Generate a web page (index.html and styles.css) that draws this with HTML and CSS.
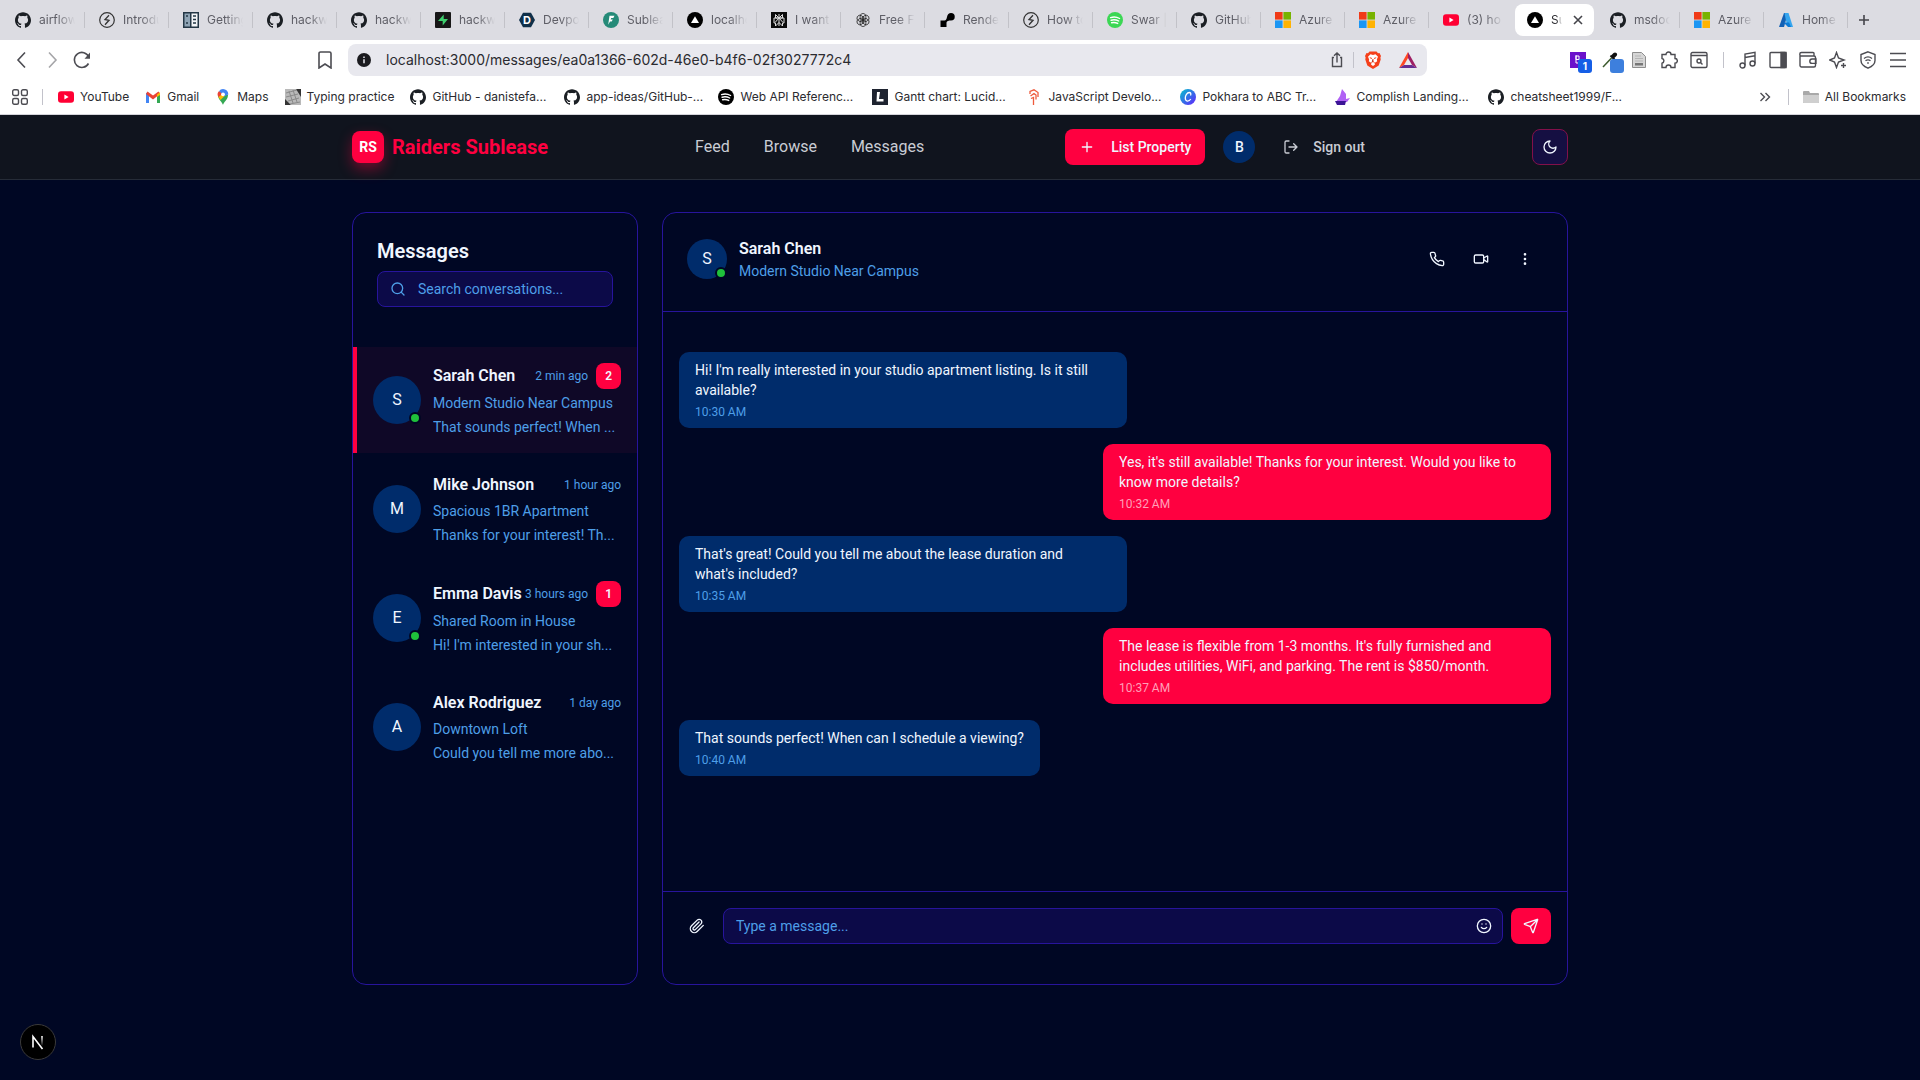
FILE: index.html
```html
<!DOCTYPE html>
<html lang="en">
  <head>
    <meta charset="UTF-8" />
    <meta name="viewport" content="width=device-width, initial-scale=1.0" />
    <title>Sublease</title>
    <link rel="stylesheet" href="styles.css">
  </head>
  <body>
    <!-- shared icons -->
    <svg class="sprite" aria-hidden="true">
      <symbol id="github" viewBox="0 0 24 24"><path fill="#1b1f24" d="M12 .297c-6.63 0-12 5.373-12 12 0 5.303 3.438 9.8 8.205 11.385.6.113.82-.258.82-.577 0-.285-.01-1.04-.015-2.04-3.338.724-4.042-1.61-4.042-1.61C4.422 18.07 3.633 17.7 3.633 17.7c-1.087-.744.084-.729.084-.729 1.205.084 1.838 1.236 1.838 1.236 1.07 1.835 2.809 1.305 3.495.998.108-.776.417-1.305.76-1.605-2.665-.3-5.466-1.332-5.466-5.93 0-1.31.465-2.38 1.235-3.22-.135-.303-.54-1.523.105-3.176 0 0 1.005-.322 3.3 1.23.96-.267 1.98-.399 3-.405 1.02.006 2.04.138 3 .405 2.28-1.552 3.285-1.23 3.285-1.23.645 1.653.24 2.873.12 3.176.765.84 1.23 1.91 1.23 3.22 0 4.61-2.805 5.625-5.475 5.92.42.36.81 1.096.81 2.22 0 1.606-.015 2.896-.015 3.286 0 .315.21.69.825.57C20.565 22.092 24 17.592 24 12.297c0-6.627-5.373-12-12-12"/></symbol>
      <symbol id="bolt" viewBox="0 0 16 16"><circle cx="8" cy="8" r="7.3" fill="none" stroke="#333" stroke-width="1.2"/><path d="M10 3.200 6 7.500l4 .8-4 4.500" fill="none" stroke="#333" stroke-width="1.300"/></symbol>
      <symbol id="book" viewBox="0 0 16 16"><path fill="#243746" d="M0 0h16v16H0z"/><path fill="#8fa4b5" d="M1.5 1.5h5.5v13H1.5z"/><path fill="#f3f5f7" d="M8.5 1.5h6v13h-6z"/><path stroke="#243746" stroke-width="1.4" d="M10 4h3M10 7.5h3M10 11h3M3 4h2M3 11h2"/></symbol>
      <symbol id="supabase" viewBox="0 0 16 16"><rect width="16" height="16" rx="1" fill="#171717"/><path fill="#3ecf6e" d="M8.700 2.500 3 9h4.700v4.500L13 7H8.700z"/></symbol>
      <symbol id="devpost" viewBox="0 0 16 16"><path fill="#0f2f49" d="M4 .8h8L16 8l-4 7.200H4L0 8z"/><text x="8" y="12" text-anchor="middle" class="mark-text">D</text></symbol>
      <symbol id="fider" viewBox="0 0 16 16"><circle cx="8" cy="8" r="8" fill="#258a78"/><path fill="#fff" d="m6.500 3.800h5L10.300 6H8.200l-.6 1.500h2.200L8.700 9.400H7L5.200 12.800z"/></symbol>
      <symbol id="next" viewBox="0 0 16 16"><circle cx="8" cy="8" r="8" fill="#000"/><path fill="#fff" d="M8 4.200 12 11H4z"/></symbol>
      <symbol id="perplexity" viewBox="0 0 16 16"><path fill="#0b0b0b" d="M0 0h16v16H0z"/><path fill="none" stroke="#ddd" d="M8 2v12M4.500 2.500 8 6l3.500-3.500V6h-7zM3 6h10v5h-1.500v3L8 10.500 4.500 14v-3H3zM8 6l-4 4.500M8 6l4 4.500"/></symbol>
      <symbol id="openai" viewBox="0 0 16 16"><g fill="none" stroke="#2b2b2b" stroke-width=".8"><ellipse cx="8" cy="5" rx="3" ry="3.600"/><ellipse cx="8" cy="5" rx="3" ry="3.600" transform="rotate(60 8 8)"/><ellipse cx="8" cy="5" rx="3" ry="3.600" transform="rotate(120 8 8)"/><ellipse cx="8" cy="5" rx="3" ry="3.600" transform="rotate(180 8 8)"/><ellipse cx="8" cy="5" rx="3" ry="3.600" transform="rotate(240 8 8)"/><ellipse cx="8" cy="5" rx="3" ry="3.600" transform="rotate(300 8 8)"/></g></symbol>
      <symbol id="render" viewBox="0 0 16 16"><path fill="#000" d="M1.500 15V8.500h4C7 8.500 7.500 7 8 5c.5-2.500 1.800-4 4-4a3.700 3.700 0 0 1 0 7.500c-2 0-4.500.5-4.500 2.500v4z"/></symbol>
      <symbol id="spotify" viewBox="0 0 16 16"><circle cx="8" cy="8" r="8"/><path fill="none" stroke="#fff" stroke-linecap="round" stroke-width="1.400" d="M3.600 5.600c3-.9 6.300-.6 9 .9M4.100 8.200c2.600-.7 5.300-.4 7.600.8M4.600 10.700c2.100-.5 4.200-.3 6.100.7"/></symbol>
      <symbol id="microsoft" viewBox="0 0 16 16"><path fill="#f03a17" d="M0 0h7.600v7.600H0z"/><path fill="#77b300" d="M8.400 0H16v7.600H8.400z"/><path fill="#1c96f3" d="M0 8.400h7.600V16H0z"/><path fill="#ffb302" d="M8.400 8.400H16V16H8.400z"/></symbol>
      <symbol id="youtube" viewBox="0 0 16 16"><rect y="2.200" width="16" height="11.600" rx="3" fill="#ff0033"/><path fill="#fff" d="M6.400 5.600 10.600 8l-4.200 2.400z"/></symbol>
      <symbol id="azure" viewBox="0 0 16 16"><path fill="#1260b4" d="M6 1h4L6 15H1z"/><path fill="#35a5ee" d="M6.500 1h4L15 15h-4.500L8 9z"/><path fill="#0a7ad6" d="M5.500 10.500H11L13 15h-3z"/></symbol>
      <symbol id="search" viewBox="0 0 24 24"><circle cx="11" cy="11" r="8"/><path d="m21 21-4.300-4.300"/></symbol>
    </svg>

    <div class="browser">
      <div class="tabs">
        <button class="tab"><svg><use href="#github"/></svg><span>airflow</span></button>
        <button class="tab"><svg><use href="#bolt"/></svg><span>Introdu</span></button>
        <button class="tab"><svg><use href="#book"/></svg><span>Getting</span></button>
        <button class="tab"><svg><use href="#github"/></svg><span>hackw</span></button>
        <button class="tab"><svg><use href="#github"/></svg><span>hackw</span></button>
        <button class="tab"><svg><use href="#supabase"/></svg><span>hackw</span></button>
        <button class="tab"><svg><use href="#devpost"/></svg><span>Devpos</span></button>
        <button class="tab"><svg><use href="#fider"/></svg><span>Sublea</span></button>
        <button class="tab"><svg><use href="#next"/></svg><span>localho</span></button>
        <button class="tab"><svg><use href="#perplexity"/></svg><span>I want</span></button>
        <button class="tab"><svg><use href="#openai"/></svg><span>Free F</span></button>
        <button class="tab"><svg><use href="#render"/></svg><span>Render</span></button>
        <button class="tab"><svg><use href="#bolt"/></svg><span>How to</span></button>
        <button class="tab"><svg fill="#3bd754"><use href="#spotify"/></svg><span>Swar |</span></button>
        <button class="tab"><svg><use href="#github"/></svg><span>GitHub</span></button>
        <button class="tab"><svg><use href="#microsoft"/></svg><span>Azure</span></button>
        <button class="tab"><svg><use href="#microsoft"/></svg><span>Azure</span></button>
        <button class="tab before-active"><svg><use href="#youtube"/></svg><span>(3) ho</span></button>
        <button class="tab active"><svg><use href="#next"/></svg><span>Su</span><svg class="close" viewBox="0 0 16 16"><path d="m4 4 8 8M12 4l-8 8"/></svg></button>
        <button class="tab"><svg><use href="#github"/></svg><span>msdoc</span></button>
        <button class="tab"><svg><use href="#microsoft"/></svg><span>Azure</span></button>
        <button class="tab"><svg><use href="#azure"/></svg><span>Home</span></button>
        <button class="new-tab" aria-label="New tab"><svg viewBox="0 0 16 16"><path d="M8 3v10M3 8h10"/></svg></button>
      </div>

      <div class="toolbar">
        <div class="history">
          <button aria-label="Back"><svg viewBox="0 0 18 18"><path d="M12 1.500 5 9l7 7.500"/></svg></button>
          <button aria-label="Forward" disabled><svg viewBox="0 0 18 18"><path d="m6 1.500 7 7.500-7 7.500"/></svg></button>
          <button aria-label="Reload"><svg viewBox="0 0 18 18"><path d="M15.500 12.500A7.500 7.500 0 1 1 15.800 6"/><path class="solid" d="M17 1.500v6.300h-5.500z"/></svg></button>
        </div>
        <button class="save" aria-label="Bookmark"><svg viewBox="0 0 18 18"><path d="M3 2.500a1.500 1.500 0 0 1 1.500-1.500h9A1.500 1.500 0 0 1 15 2.500V17l-6-4-6 4z"/></svg></button>
        <div class="address">
          <svg class="site-info" viewBox="0 0 14 14"><circle cx="7" cy="7" r="7" fill="#1b1b1f"/><path stroke="#e8e8ee" stroke-width="1.500" d="M7 6.200v4M7 3.500v1.500"/></svg>
          <input type="text" aria-label="Address" value="localhost:3000/messages/ea0a1366-602d-46e0-b4f6-02f3027772c4">
          <svg class="line" viewBox="0 0 16 16"><path d="M5 5.500H3.500v9h9v-9H11M8 10.500V1M5 3.800 8 1l3 2.800"/></svg>
          <i></i>
          <svg class="brave" viewBox="0 0 16 18"><path fill="#f5401b" d="M4.500.5h7l1.500 1.700 1.500-.2L16 5l-.6 1.500.3 2-2 6L8 18l-5.700-3.500-2-6 .3-2L0 5l1.500-3 1.500.2z"/><path fill="#fff" d="m8 4 2.500-.8 2.500 2.500-1.200 2.800.4 1.800-2.700 1.700.5 1.500-2 1.500-2-1.500.5-1.500-2.700-1.700.4-1.800L3 5.700l2.500-2.500z"/><path stroke="#f5401b" d="m4.800 6.700 2.200.8M11.200 6.700 9 7.500M8 8v2.500l-1.500 1M8 10.500l1.500 1"/></svg>
          <svg class="triangle" viewBox="0 0 18 16"><path fill="#ff4724" d="M9 0 0 16l5-3 4-7z"/><path fill="#9e1f63" d="m9 0 9 16-5-3-4-7z"/><path fill="#662d91" d="m0 16 5-3h8l5 3z"/></svg>
        </div>
        <div class="extensions">
          <button aria-label="Bookmarker" class="ext"><svg viewBox="0 0 16 16"><path fill="#6a11cb" d="M0 0h16v16H0z"/><path stroke="#fff" fill="none" d="M6 3v8h3.500V7.500H6V4h3v3.500"/></svg><b>1</b></button>
          <button aria-label="Color picker" class="ext"><svg viewBox="0 0 16 16"><path stroke="#3c5a2e" stroke-width="1.500" d="m1 15 8.500-9"/><path stroke="#111" stroke-width="4" stroke-linecap="round" d="m11.500 4 1.500-1.500"/><path stroke="#111" stroke-width="2" d="m8.500 3.500 4 4"/></svg><b class="plain"></b></button>
          <button aria-label="Document"><svg viewBox="0 0 16 18"><path fill="#d6d6d6" stroke="#8d8d8d" d="M1.500 1.500h9l4 4v11h-13z"/><path stroke="#b4b4b4" d="M4 5h6M4 7.500h8M4 10h8"/><path fill="#777" d="M4 12h8v2.500H4z"/></svg></button>
          <button aria-label="Extensions"><svg class="line" viewBox="0 0 18 18"><path d="M2 3.500h4a2.500 2.500 0 0 1 5 0h4v4a2.300 2.300 0 0 1 0 4.700V16.500h-4a2.300 2.300 0 0 0-5 0H2v-4.300a2.400 2.400 0 0 0 0-4.700z"/></svg></button>
          <button aria-label="Find"><svg class="line" viewBox="0 0 18 18"><rect x="1" y="1.500" width="16" height="15" rx="1.500"/><path d="M1 4.500h16M10.500 11.500l2 2"/><circle cx="9" cy="10" r="2"/></svg></button>
          <i></i>
          <button aria-label="Music"><svg class="line" viewBox="0 0 18 18"><circle cx="3.500" cy="14.500" r="2.500"/><circle cx="13.500" cy="12.500" r="2.500"/><path d="M6 14.500V3l10-1.700v11.200M6 6.500l10-1.700"/></svg></button>
          <button aria-label="Sidebar"><svg class="line" viewBox="0 0 18 18"><rect x="1" y="1.500" width="16" height="15" rx="1"/><path fill="#4c4c52" d="M12 1.500h5v15h-5z"/></svg></button>
          <button aria-label="Wallet"><svg class="line" viewBox="0 0 18 18"><path d="M15 5V2.500A1 1 0 0 0 14 1.500H2.500a1.500 1.500 0 0 0 0 3.500H15a1.500 1.500 0 0 1 1.500 1.500v8a1.500 1.500 0 0 1-1.500 1.500H2.500A1.500 1.500 0 0 1 1 14.500V3.500M17 8h-4a2.200 2.200 0 0 0 0 4.400h4z"/></svg></button>
          <button aria-label="Leo"><svg class="line" viewBox="0 0 18 18"><path d="M7.500 1.500 9.500 7l5.500 2-5.500 2-2 5.500-2-5.500L0.800 9l4.700-2zM14.500 12v5M12 14.500h5"/></svg></button>
          <button aria-label="VPN"><svg class="line" viewBox="0 0 18 18"><path d="m9 .8 7 2.700v6c0 3.500-3 6-7 7.700-4-1.700-7-4.200-7-7.700v-6zM5 7.500c2.500-2 5.500-2 8 0M6.500 9.800c1.600-1.200 3.400-1.200 5 0M8.200 12h1.600"/></svg></button>
          <button aria-label="Menu"><svg class="line" viewBox="0 0 18 18"><path d="M1 2.500h16M1 9h16M1 15.500h16"/></svg></button>
        </div>
      </div>

      <div class="bookmarks">
        <svg class="line apps" viewBox="0 0 16 16"><rect x=".7" y=".7" width="5.800" height="5.800" rx="1.500"/><rect x="9.500" y=".7" width="5.800" height="5.800" rx="1.500"/><rect x=".7" y="9.500" width="5.800" height="5.800" rx="1.500"/><rect x="9.500" y="9.500" width="5.800" height="5.800" rx="1.500"/></svg>
        <i></i>
        <a href="#"><svg><use href="#youtube"/></svg>YouTube</a>
        <a href="#"><svg viewBox="0 0 16 16"><path fill="#4285f4" d="M1 3.500 4 6v8H1z"/><path fill="#34a853" d="m15 3.500-3 2.500v8h3z"/><path fill="#ea4335" d="m2.500 2.500 5.500 4 5.500-4L15 5l-7 5.500L1 5z"/><path fill="#fbbc04" d="m12 5.500 3-2.300V6l-3 2z"/></svg>Gmail</a>
        <a href="#"><svg viewBox="0 0 16 16"><path fill="#34a853" d="M8 16c-.5-3-5-5-5-10h10c0 5-4.500 7-5 10z"/><path fill="#4285f4" d="M8 0a5.300 5.300 0 0 1 5.300 5.500L8 8 4 2.200A5 5 0 0 1 8 0z"/><path fill="#ea4335" d="M4 2.200 8 5.500 4.500 9C1.500 6 2.500 3.500 4 2.200z"/><path fill="#fbbc04" d="M3.500 8 8 4.500 9.500 7 5.500 11z"/><circle cx="8" cy="5.300" r="1.900" fill="#fff"/></svg>Maps</a>
        <a href="#"><svg viewBox="0 0 16 16"><path fill="#b9b9b9" d="M0 0h16v16H0z"/><path fill="#333" d="m11 0 5 0v8zM0 10l6 6H0z"/><path stroke="#8a8a8a" d="m1 4 11-3M1 8l12-3M3 12l11-3M5 15l10-2M4 2l4 12M8 1l4 12"/></svg>Typing practice</a>
        <a class="long" href="#"><svg><use href="#github"/></svg>GitHub - danistefa...</a>
        <a class="long" href="#"><svg><use href="#github"/></svg>app-ideas/GitHub-...</a>
        <a class="long" href="#"><svg><use href="#spotify"/></svg>Web API Referenc...</a>
        <a class="long" href="#"><svg viewBox="0 0 16 16"><path fill="#1e2330" d="M0 0h16v16H0z"/><path fill="#fff" d="M5 3h3L7 10h4.500v2.500H4.500z"/></svg>Gantt chart: Lucid...</a>
        <a class="long" href="#"><svg viewBox="0 0 16 16"><path fill="none" stroke="#ee5a3c" stroke-width="1.300" d="M4 5V2.500L8 .8l4 2.700V8M4.500 7 8 4.500 10 6v4.500M5 9.500l2.500-1V16"/></svg>JavaScript Develo...</a>
        <a class="long" href="#"><svg viewBox="0 0 16 16"><defs><linearGradient id="canva" x2="1" y2="1"><stop stop-color="#00c4cc"/><stop offset="1" stop-color="#6420ff"/></linearGradient></defs><circle cx="8" cy="8" r="8" fill="url(#canva)"/><path fill="none" stroke="#fff" stroke-width="1.300" d="M10.500 6.500c.8-1.700.2-3-1.300-3C7 3.500 5.300 6.500 5.300 9c0 3.800 3.500 4 5.500 1"/></svg>Pokhara to ABC Tr...</a>
        <a class="long" href="#"><svg viewBox="0 0 16 16"><path fill="#b061f5" d="m8 0 4 5v5l4-1-3 4H2l4-6z"/><path fill="#3c1496" d="M1 12h11l-1 4H3z"/></svg>Complish Landing...</a>
        <a class="long" href="#"><svg><use href="#github"/></svg>cheatsheet1999/F...</a>
        <button class="more" aria-label="More bookmarks"><svg class="line" viewBox="0 0 16 16"><path d="m3.500 4 4 4-4 4M8.500 4l4 4-4 4"/></svg></button>
        <i></i>
        <a href="#" class="all"><svg viewBox="0 0 16 16"><path fill="#a9a9a9" d="M0 3a1 1 0 0 1 1-1h5l1 2h8a1 1 0 0 1 1 1v8a1 1 0 0 1-1 1H1a1 1 0 0 1-1-1z"/><path fill="#cfcfcf" d="M0 6h16v7a1 1 0 0 1-1 1H1a1 1 0 0 1-1-1z"/></svg>All Bookmarks</a>
      </div>
    </div>

    <header class="site-header">
      <div class="container">
        <a class="logo" href="#"><span>RS</span>Raiders Sublease</a>
        <nav>
          <a href="#">Feed</a>
          <a href="#">Browse</a>
          <a href="#">Messages</a>
        </nav>
        <div class="account">
          <button class="list-btn"><svg class="icon" viewBox="0 0 24 24"><path d="M5 12h14M12 5v14"/></svg>List Property</button>
          <span class="avatar small">B</span>
          <button class="sign-out"><svg class="icon" viewBox="0 0 24 24"><path d="M9 21H5a2 2 0 0 1-2-2V5a2 2 0 0 1 2-2h4M16 17l5-5-5-5M21 12H9"/></svg>Sign out</button>
        </div>
        <button class="theme" aria-label="Toggle theme"><svg class="icon" viewBox="0 0 24 24"><path d="M12 3a6 6 0 0 0 9 9 9 9 0 1 1-9-9z"/></svg></button>
      </div>
    </header>

    <main class="container">
      <section class="card sidebar">
        <div class="sidebar-head">
          <h1>Messages</h1>
          <div class="search">
            <svg class="icon"><use href="#search"/></svg>
            <input type="text" aria-label="Search conversations" placeholder="Search conversations...">
          </div>
        </div>
        <ul class="conversations">
          <li class="active">
            <span class="avatar online">S</span>
            <div class="info">
              <div class="top"><h2>Sarah Chen</h2><time>2 min ago</time><b>2</b></div>
              <p>Modern Studio Near Campus</p>
              <p>That sounds perfect! When ...</p>
            </div>
          </li>
          <li>
            <span class="avatar">M</span>
            <div class="info">
              <div class="top"><h2>Mike Johnson</h2><time>1 hour ago</time></div>
              <p>Spacious 1BR Apartment</p>
              <p>Thanks for your interest! Th...</p>
            </div>
          </li>
          <li>
            <span class="avatar online">E</span>
            <div class="info">
              <div class="top"><h2>Emma Davis</h2><time>3 hours ago</time><b>1</b></div>
              <p>Shared Room in House</p>
              <p>Hi! I'm interested in your sh...</p>
            </div>
          </li>
          <li>
            <span class="avatar">A</span>
            <div class="info">
              <div class="top"><h2>Alex Rodriguez</h2><time>1 day ago</time></div>
              <p>Downtown Loft</p>
              <p>Could you tell me more abo...</p>
            </div>
          </li>
        </ul>
      </section>

      <section class="card chat">
        <div class="chat-head">
          <span class="avatar medium online">S</span>
          <div class="person">
            <h2>Sarah Chen</h2>
            <p>Modern Studio Near Campus</p>
          </div>
          <button class="ghost" aria-label="Call"><svg class="icon" viewBox="0 0 24 24"><path d="M22 16.920v3a2 2 0 0 1-2.180 2 19.790 19.790 0 0 1-8.630-3.070 19.500 19.500 0 0 1-6-6 19.790 19.790 0 0 1-3.070-8.670A2 2 0 0 1 4.110 2h3a2 2 0 0 1 2 1.720 12.840 12.840 0 0 0 .7 2.810 2 2 0 0 1-.45 2.110L8.090 9.910a16 16 0 0 0 6 6l1.270-1.270a2 2 0 0 1 2.110-.45 12.840 12.840 0 0 0 2.810.7A2 2 0 0 1 22 16.920z"/></svg></button>
          <button class="ghost" aria-label="Video call"><svg class="icon" viewBox="0 0 24 24"><path d="m16 13 5.223 3.482a.5.5 0 0 0 .777-.416V7.870a.5.5 0 0 0-.752-.432L16 10.500"/><rect x="2" y="6" width="14" height="12" rx="2"/></svg></button>
          <button class="ghost" aria-label="More"><svg class="icon" viewBox="0 0 24 24"><circle cx="12" cy="12" r="1"/><circle cx="12" cy="5" r="1"/><circle cx="12" cy="19" r="1"/></svg></button>
        </div>
        <div class="messages">
          <div class="bubble"><p>Hi! I'm really interested in your studio apartment listing. Is it still available?</p><time>10:30 AM</time></div>
          <div class="bubble mine"><p>Yes, it's still available! Thanks for your interest. Would you like to know more details?</p><time>10:32 AM</time></div>
          <div class="bubble wide"><p>That's great! Could you tell me about the lease duration and<br>what's included?</p><time>10:35 AM</time></div>
          <div class="bubble mine"><p>The lease is flexible from 1-3 months. It's fully furnished and includes utilities, WiFi, and parking. The rent is $850/month.</p><time>10:37 AM</time></div>
          <div class="bubble"><p>That sounds perfect! When can I schedule a viewing?</p><time>10:40 AM</time></div>
        </div>
        <form class="composer">
          <button type="button" class="ghost" aria-label="Attach"><svg class="icon" viewBox="0 0 24 24"><path d="m21.440 11.050-9.190 9.190a6 6 0 0 1-8.490-8.490l8.570-8.570A4 4 0 1 1 18 8.840l-8.590 8.570a2 2 0 0 1-2.830-2.830l8.490-8.480"/></svg></button>
          <div class="field">
            <input type="text" aria-label="Message" placeholder="Type a message...">
            <button type="button" class="ghost" aria-label="Emoji"><svg class="icon" viewBox="0 0 24 24"><circle cx="12" cy="12" r="10"/><path d="M8 14s1.500 2 4 2 4-2 4-2M9 9h.01M15 9h.01"/></svg></button>
          </div>
          <button type="button" class="send" aria-label="Send"><svg class="icon" viewBox="0 0 24 24"><path d="M14.536 21.686a.5.5 0 0 0 .937-.024l6.500-19a.496.496 0 0 0-.635-.635l-19 6.500a.5.5 0 0 0-.024.937l7.930 3.180a2 2 0 0 1 1.112 1.110zM21.854 2.147l-10.940 10.939"/></svg></button>
        </form>
      </section>
    </main>

    <button class="dev-badge" aria-label="Dev tools"><svg viewBox="0 0 36 36"><defs><linearGradient id="fade" gradientUnits="userSpaceOnUse" x1="22" y1="12" x2="22" y2="22"><stop stop-color="#fff"/><stop offset="1" stop-color="#fff" stop-opacity="0"/></linearGradient></defs><path d="M13 23.500V12.500L22.500 25"/><path stroke="url(#fade)" d="M22 12v10"/></svg></button>
  </body>
</html>
```
FILE: styles.css
```css
*,
*::before,
*::after {
  margin: 0;
  padding: 0;
  box-sizing: border-box;
}
body {
  min-height: 100vh;
  background-color: #000724;
  color: #f0f6ff;
  font-family: Roboto, "Liberation Sans", sans-serif;
  font-size: 14px;
  line-height: 20px;
}
a {
  color: inherit;
  text-decoration: none;
}
ul {
  list-style-type: none;
}
button,
input {
  border: 0;
  background: none;
  color: inherit;
  font: inherit;
}
button {
  display: flex;
  align-items: center;
  justify-content: center;
  cursor: pointer;
}
input {
  min-width: 0;
  outline: none;
}
svg {
  flex-shrink: 0;
}
.sprite {
  display: none;
}
.mark-text {
  fill: #fff;
  font-size: 11px;
  font-weight: 700;
}

/* browser */
.browser {
  height: 115px;
  border-bottom: 1px solid #d4d4da;
  background-color: #fff;
  color: #2b2b30;
  font-family: Inter, sans-serif;
  font-size: 12px;
  line-height: 16px;
}
.browser i {
  width: 1px;
  height: 16px;
  background-color: #c2c2ca;
}
.line {
  fill: none;
  stroke: #4c4c52;
  stroke-width: 1.4;
}
.tabs {
  display: flex;
  align-items: center;
  height: 40px;
  padding-left: 1px;
  background-color: #dcdce2;
}
.tab {
  position: relative;
  flex: 0 1 84px;
  justify-content: flex-start;
  gap: 8px;
  min-width: 0;
  height: 32px;
  padding: 0 10px 0 14px;
  color: #5e5e66;
}
.tab::after {
  content: "";
  position: absolute;
  right: 0;
  width: 1px;
  height: 16px;
  background-color: #c2c2c8;
}
.tab svg {
  width: 16px;
  height: 16px;
}
.tab span {
  flex: 1;
  min-width: 0;
  overflow: hidden;
  text-align: left;
  white-space: nowrap;
  mask-image: linear-gradient(to right, #000 50%, transparent);
}
.tab.active {
  flex-basis: 79px;
  margin: 0 2px;
  border-radius: 8px;
  background-color: #fff;
  color: #2b2b30;
  padding: 0 8px 0 12px;
}
.tab.active::after,
.tab.before-active::after {
  display: none;
}
.tab .close,
.new-tab svg {
  width: 16px;
  height: 16px;
  fill: none;
  stroke: #44444a;
  stroke-width: 1.6;
}
.new-tab {
  width: 32px;
  height: 32px;
}
.toolbar {
  display: flex;
  align-items: center;
  height: 40px;
  padding: 0 13px;
}
.history {
  display: flex;
  gap: 12px;
  width: 303px;
}
.history svg,
.save svg {
  width: 18px;
  height: 18px;
  fill: none;
  stroke: #4c4c52;
  stroke-width: 1.6;
}
.history .solid {
  fill: #4c4c52;
  stroke: none;
}
.history button:disabled {
  opacity: 0.5;
}
.address {
  display: flex;
  align-items: center;
  flex: 1;
  height: 32px;
  margin-left: 14px;
  padding: 0 10px 0 9px;
  border-radius: 8px;
  background-color: #e8e8ee;
}
.site-info {
  width: 14px;
  height: 14px;
  margin-right: 15px;
}
.address input {
  flex: 1;
  font-size: 14px;
}
.address .line {
  width: 16px;
  height: 16px;
  margin-right: 8px;
}
.address .brave {
  width: 16px;
  height: 18px;
  margin: 0 18px 0 11px;
}
.address .triangle {
  width: 18px;
  height: 16px;
}
.extensions {
  display: flex;
  align-items: center;
  gap: 12px;
  margin-left: 143px;
}
.extensions i {
  margin: 0 3px;
}
.extensions svg {
  width: 18px;
  height: 18px;
}
.extensions .ext {
  position: relative;
}
.extensions .ext svg {
  width: 16px;
  height: 16px;
}
.extensions .ext:first-child {
  margin-right: 4px;
}
.ext b {
  position: absolute;
  right: -6px;
  bottom: -5px;
  width: 14px;
  height: 14px;
  border-radius: 3px;
  background-color: #155ee6;
  color: #fff;
  font-size: 10px;
  line-height: 14px;
}
.ext .plain {
  background-color: #3d7fdd;
}
.bookmarks {
  display: flex;
  align-items: center;
  height: 34px;
  padding: 0 14px 0 12px;
}
.bookmarks svg {
  width: 16px;
  height: 16px;
}
.bookmarks a {
  display: flex;
  align-items: center;
  gap: 6px;
  margin-right: 16px;
  white-space: nowrap;
}
.bookmarks .long {
  flex: 0 1 154px;
  margin-right: 0;
}
.bookmarks .apps + i {
  margin: 0 15px 0 14px;
}
.bookmarks .more {
  margin: 0 15px 0 auto;
}
.bookmarks .all {
  margin: 0 0 0 14px;
}

/* site header */
.container {
  width: 100%;
  max-width: 1280px;
  margin: 0 auto;
  padding: 0 32px;
}
.icon {
  width: 16px;
  height: 16px;
  fill: none;
  stroke: currentColor;
  stroke-width: 2;
  stroke-linecap: round;
  stroke-linejoin: round;
}
.site-header {
  border-bottom: 1px solid #262c38;
  background-color: #10141e;
}
.site-header .container {
  display: flex;
  align-items: center;
  justify-content: space-between;
  height: 64px;
}
.logo {
  display: flex;
  align-items: center;
  gap: 8px;
  padding-right: 6px;
  color: #ff0040;
  font-size: 20px;
  font-weight: 700;
}
.logo span {
  width: 32px;
  border-radius: 8px;
  background-color: #ff0040;
  box-shadow: 0 6px 14px rgba(255, 0, 64, 0.4);
  color: #fff;
  font-size: 14px;
  line-height: 32px;
  text-align: center;
}
.site-header nav {
  display: flex;
  gap: 34px;
  color: #c9ccd4;
  font-size: 16px;
}
.account {
  display: flex;
  align-items: center;
  gap: 18px;
  font-weight: 500;
}
.list-btn,
.sign-out {
  gap: 16px;
  height: 36px;
  padding: 0 12px;
  border-radius: 8px;
}
.list-btn {
  min-width: 140px;
  background-color: #ff0040;
}
.sign-out {
  gap: 14px;
  padding: 0 26px 0 10px;
  color: #c9ccd4;
}
.theme {
  width: 36px;
  height: 36px;
  border: 1px solid #82104a;
  border-radius: 8px;
  background-color: #150f42;
}
.avatar {
  position: relative;
  flex-shrink: 0;
  width: 48px;
  border-radius: 50%;
  background-color: #002c6b;
  font-size: 16px;
  line-height: 48px;
  text-align: center;
}
.avatar.small {
  width: 32px;
  font-size: 14px;
  line-height: 32px;
}
.avatar.medium {
  width: 40px;
  line-height: 40px;
}
.avatar.online::after {
  content: "";
  position: absolute;
  right: 0;
  bottom: 0;
  width: 12px;
  height: 12px;
  border: 2px solid #000724;
  border-radius: 50%;
  background-color: #1fc13b;
}

/* messages page */
main.container {
  display: grid;
  grid-template-columns: repeat(4, minmax(0, 1fr));
  gap: 24px;
  padding-top: 32px;
}
.card {
  height: calc(100vh - 307px);
  min-height: 600px;
  border: 1px solid #27149c;
  border-radius: 14px;
}
.card p {
  color: #4e9fe8;
}
.card h2 {
  font-size: 16px;
  font-weight: 600;
  line-height: 24px;
}
.sidebar-head {
  padding: 24px 24px 40px;
}
.sidebar h1 {
  margin-bottom: 6px;
  font-size: 20px;
  font-weight: 600;
  line-height: 28px;
}
.search,
.field {
  display: flex;
  align-items: center;
  height: 36px;
  padding: 0 12px;
  border: 1px solid #27149c;
  border-radius: 8px;
  background-color: #0c0a48;
}
.search .icon {
  color: #4e9fe8;
}
.search input {
  flex: 1;
  margin-left: 12px;
}
input::placeholder {
  color: #4e9fe8;
  opacity: 1;
}
.conversations {
  display: flex;
  flex-direction: column;
  gap: 4px;
}
.conversations li {
  display: flex;
  align-items: center;
  gap: 12px;
  padding: 16px;
  border-left: 4px solid transparent;
}
.conversations .active {
  border-color: #ff0040;
  background-color: #0f0827;
}
.info {
  flex: 1;
  min-width: 0;
}
.top {
  display: flex;
  align-items: center;
  white-space: nowrap;
}
.top time {
  margin-left: auto;
  color: #4e9fe8;
  font-size: 12px;
}
.top b {
  margin-left: 8px;
  padding: 0 9px;
  border-radius: 8px;
  background-color: #ff0040;
  font-size: 12px;
  font-weight: 600;
  line-height: 26px;
}
.info p {
  overflow: hidden;
  margin-top: 4px;
  text-overflow: ellipsis;
  white-space: nowrap;
}
.chat {
  display: flex;
  flex-direction: column;
  grid-column: span 3;
}
.chat-head {
  display: flex;
  align-items: center;
  gap: 8px;
  padding: 24px 24px 30px;
  border-bottom: 1px solid #27149c;
}
.person {
  flex: 1;
  padding-left: 4px;
}
.ghost {
  width: 36px;
  height: 36px;
}
.messages {
  display: flex;
  flex: 1;
  flex-direction: column;
  align-items: flex-start;
  gap: 16px;
  min-height: 0;
  padding: 40px 16px 16px;
  overflow: auto;
}
.bubble {
  max-width: 448px;
  padding: 8px 16px;
  border-radius: 10px;
  background-color: #002c6b;
}
.bubble.wide {
  width: 100%;
}
.bubble p {
  color: #f0f6ff;
}
.bubble time {
  display: block;
  margin-top: 4px;
  color: #4e9fe8;
  font-size: 12px;
  line-height: 16px;
}
.bubble.mine {
  align-self: flex-end;
  background-color: #ff0040;
}
.bubble.mine time {
  color: #ff9fb8;
}
.composer {
  display: flex;
  gap: 8px;
  padding: 16px 16px 40px;
  border-top: 1px solid #27149c;
}
.field {
  flex: 1;
  padding-right: 0;
}
.field input {
  flex: 1;
}
.send {
  width: 40px;
  height: 36px;
  border-radius: 8px;
  background-color: #ff0040;
}
.dev-badge {
  position: fixed;
  bottom: 20px;
  left: 20px;
  width: 36px;
  height: 36px;
  border: 1px solid #3a3a3a;
  border-radius: 50%;
  background-color: #000;
}
.dev-badge svg {
  width: 36px;
  height: 36px;
  fill: none;
  stroke: #fff;
  stroke-width: 1.6;
}
```
